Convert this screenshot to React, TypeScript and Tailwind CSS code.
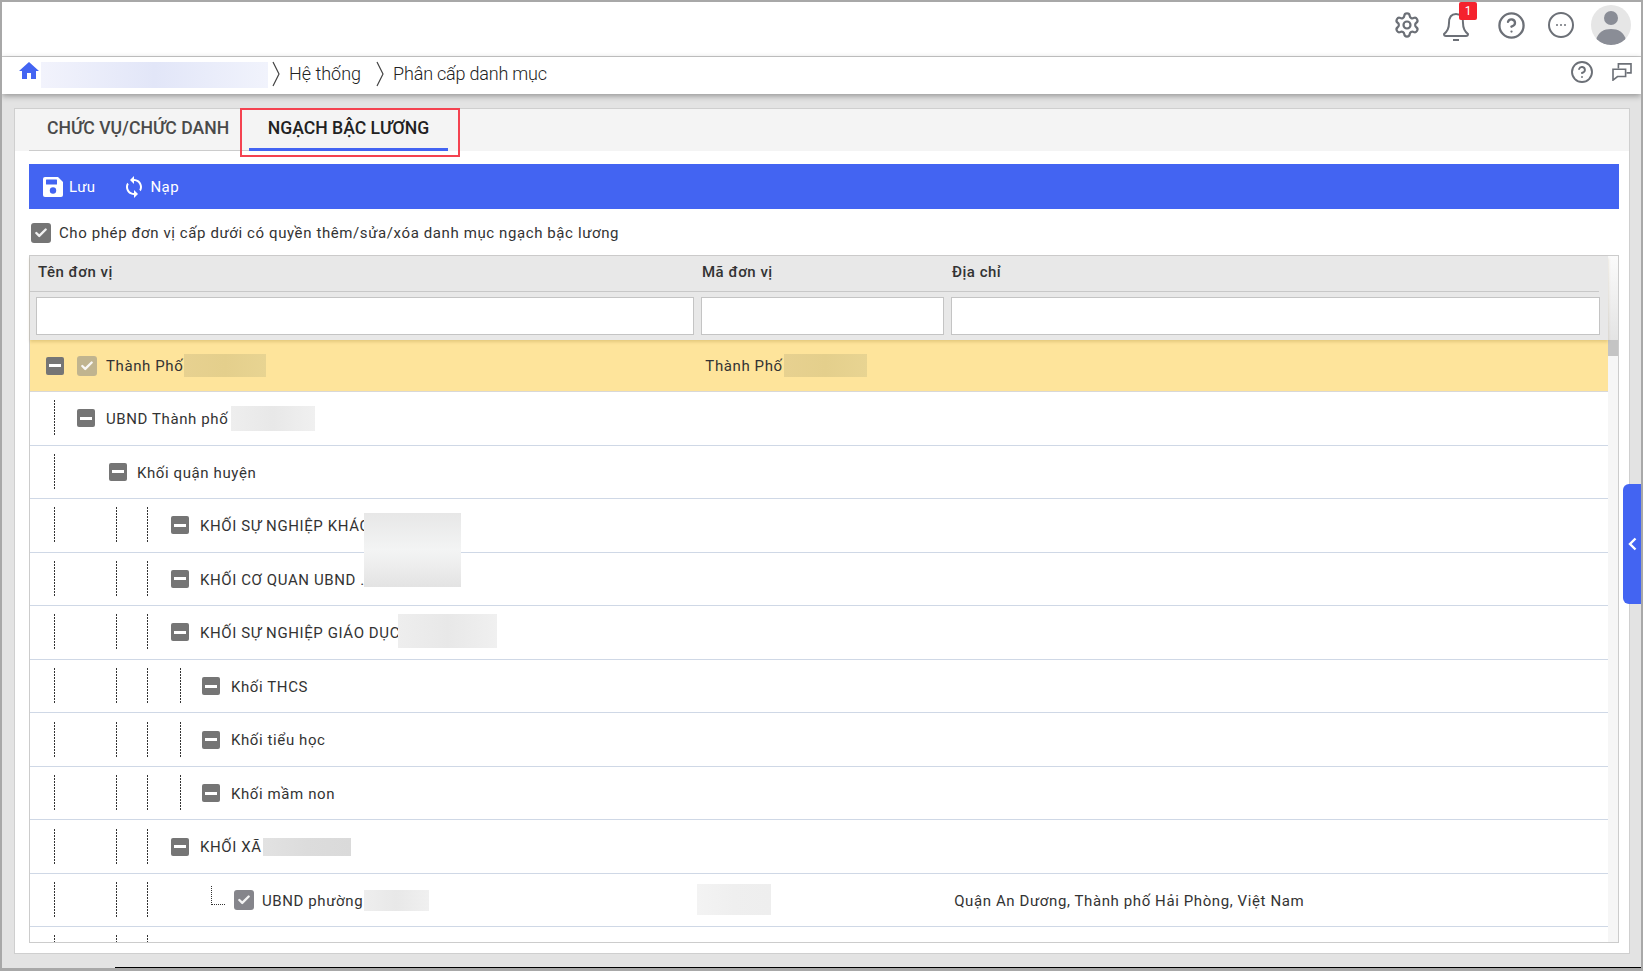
import React from 'react';
import { Settings, CircleHelp, Check } from 'lucide-react';
import { MdHome, MdSync } from 'react-icons/md';

const MinusBox = ({ className = '' }: { className?: string }) => (
    <span className={`flex h-[18px] w-[18px] shrink-0 items-center justify-center rounded-[2px] bg-[#757575] ${className}`}>
        <span className="h-[3px] w-[12px] bg-white" />
    </span>
);

const CheckBox = ({ className = '' }: { className?: string }) => (
    <span className={`flex h-[20px] w-[20px] shrink-0 items-center justify-center rounded-[3px] ${className}`}>
        <Check size={14} strokeWidth={4} className="text-white opacity-90" />
    </span>
);

// Dotted tree guide
const Guide = ({ className = '' }: { className?: string }) => (
    <span className={`h-[36px] w-px shrink-0 bg-[repeating-linear-gradient(to_bottom,#333_0,#333_2px,transparent_2px,transparent_3px)] ${className}`} />
);

const Smudge = ({ className = '' }: { className?: string }) => (
    <span className={`block shrink-0 bg-gradient-to-r from-[#eeeeee] via-[#e8e8e8] to-[#f0f0f0] ${className}`} />
);

const Row = ({ children, className = '' }: { children: React.ReactNode; className?: string }) => (
    <div className={`flex h-[53.55px] items-center border-b border-[#cfd8e6] ${className}`}>{children}</div>
);

const Label = ({ children, className = '' }: { children: React.ReactNode; className?: string }) => (
    <span className={`mt-[2px] whitespace-nowrap text-[15px] tracking-[0.6px] text-[#333] ${className}`}>{children}</span>
);

const BreadcrumbArrow = () => (
    <svg width="8" height="26" viewBox="0 0 8 26" className="shrink-0 text-[#444]">
        <path d="M1 1 L7 13 L1 25" fill="none" stroke="currentColor" strokeWidth="1.2" />
    </svg>
);

const Header = () => (
    <>
        <div className="flex h-[55px] shrink-0 items-center justify-end border-b border-[#ccc] bg-white pb-[8px]">
            <Settings size={28} strokeWidth={1.9} className="ml-auto text-[#6c7077]" />
            <div className="relative ml-[21px] mr-[1px]">
                <svg width="28" height="30" viewBox="0 0 28 30" fill="none" stroke="#6c7077" strokeWidth="2" className="mt-[2px]">
                    <path d="M14 3 C8 3 7 8 7 12 C7 17 6 20 2 23 C2 25 3 25 4 25 H24 C25 25 26 25 26 23 C22 20 21 17 21 12 C21 8 20 3 14 3 Z" strokeLinejoin="round" />
                    <path d="M11 29 H17" />
                </svg>
                <span className="absolute -right-[7px] -top-[7px] flex h-[18px] w-[18px] items-center justify-center rounded-[2px] bg-[#f5222d] text-[12px] leading-none text-white">1</span>
            </div>
            <CircleHelp size={29} strokeWidth={1.9} className="ml-[26px] text-[#6c7077]" />
            <span className="ml-[22px] flex h-[26px] w-[26px] items-center justify-center gap-[2px] rounded-full border-2 border-[#6c7077]">
                <span className="h-[2px] w-[2px] rounded-full bg-[#6c7077]" />
                <span className="h-[2px] w-[2px] rounded-full bg-[#6c7077]" />
                <span className="h-[2px] w-[2px] rounded-full bg-[#6c7077]" />
            </span>
            <span className="ml-[17px] mr-[10px] flex h-[40px] w-[40px] items-center justify-center overflow-hidden rounded-full bg-[#e6e6e6]">
                <svg width="40" height="40" viewBox="0 0 40 40">
                    <circle cx="20" cy="13" r="7" fill="#8a8d96" />
                    <path d="M5 35 C7 27 13 24 20 24 C27 24 33 27 35 35 C31 38 26 40 20 40 C14 40 9 38 5 35 Z" fill="#8a8d96" />
                </svg>
            </span>
        </div>
        <div className="relative z-10 flex h-[37px] shrink-0 items-center bg-white pb-[7px] pl-[16px] shadow-[0_2px_6px_rgba(0,0,0,0.35)]">
            <MdHome size={24} className="-ml-[1px] mb-[2px] text-[#4364f2]" />
            <span className="h-[26px] w-[227px] bg-gradient-to-r from-[#f2f3fc] via-[#e2e6f8] to-[#f1f3fc] mt-[5px]" />
            <span className="ml-[4px] mt-[3px]"><BreadcrumbArrow /></span>
            <span className="ml-[9px] mt-[3px] text-[18px] font-light text-[#222]">Hệ thống</span>
            <span className="ml-[15px] mt-[3px]"><BreadcrumbArrow /></span>
            <span className="ml-[9px] mt-[3px] text-[18px] font-light tracking-[-0.2px] text-[#222]">Phân cấp danh mục</span>
            <CircleHelp size={24} strokeWidth={1.9} className="ml-auto text-[#6c7077]" />
            <svg width="20" height="18" viewBox="0 0 22 20" className="ml-[18px] mr-[9px] text-[#6c7077]" fill="none" stroke="currentColor" strokeWidth="1.8">
                <path d="M7 6 V1 H21 V11 H16" />
                <path d="M1 7 H15 V15 H6 L1 19 Z" />
            </svg>
        </div>
    </>
);

const Tabs = () => (
    <div className="relative flex h-[42px] shrink-0 bg-[#f4f4f4] pl-[14px]">
        <div className="flex w-[220px] items-center border-b border-[#ccc] pb-[2px] pl-[18px]">
            <span className="whitespace-nowrap text-[17.6px] font-medium text-[#4a4a4a]">CHỨC VỤ/CHỨC DANH</span>
        </div>
        <div className="flex w-[199px] items-center justify-center border-b-[3px] border-[#4364f2]">
            <span className="whitespace-nowrap text-[17.6px] font-medium text-[#222]">NGẠCH BẬC LƯƠNG</span>
        </div>
        <div className="absolute left-[225px] top-[-1px] h-[49px] w-[220px] border-2 border-[#f44250]" />
    </div>
);

const Toolbar = () => (
    <div className="ml-[14px] mr-[10px] mt-[13px] flex h-[45px] shrink-0 items-center bg-[#4364f2] pl-[14px] text-[15px] tracking-[0.4px] text-white">
        <svg width="20" height="20" viewBox="0 0 20 20" fill="white">
            <path d="M2 0 H15 L20 5 V18 A2 2 0 0 1 18 20 H2 A2 2 0 0 1 0 18 V2 A2 2 0 0 1 2 0 Z" />
            <rect x="3" y="2.5" width="11" height="5" rx="0.5" fill="#4364f2" />
            <circle cx="10" cy="13.5" r="3.2" fill="#4364f2" />
        </svg>
        <span className="ml-[6px] mt-[2px]">Lưu</span>
        <MdSync size={24} className="ml-[26px] mt-[1px]" />
        <span className="ml-[5px] mt-[2px]">Nạp</span>
    </div>
);

const TreeTable = () => (
    <div className="ml-[14px] mr-[10px] mt-[12px] flex min-h-0 flex-1 border border-[#ccc]">
        <div className="relative flex min-w-0 flex-1 flex-col">
            {/* Head */}
            <div className="relative z-10 shrink-0 bg-[#e8e8e8] shadow-[0_2px_3px_rgba(120,90,0,0.2)]">
                <div className="mr-[9px] flex h-[36px] items-center border-b border-[#c8c8c8] pb-[2px] text-[15px] font-medium tracking-[0.5px] text-[#333]">
                    <span className="ml-[8px] w-[664px]">Tên đơn vị</span>
                    <span className="w-[250px]">Mã đơn vị</span>
                    <span>Địa chỉ</span>
                </div>
                <div className="flex h-[48px] gap-[7px] pl-[6px] pt-[5px]">
                    <div className="h-[38px] w-[658px] border border-[#c4c4c4] bg-white" />
                    <div className="h-[38px] w-[243px] border border-[#c4c4c4] bg-white" />
                    <div className="h-[38px] w-[649px] border border-[#c4c4c4] bg-white" />
                </div>
            </div>

            {/* Tree rows */}
            <div className="relative min-h-0 flex-1 overflow-hidden">
                <div className="flex h-[52px] items-center border-b border-[#d8d8d8] bg-[#fee49b]">
                    <MinusBox className="ml-[16px]" />
                    <CheckBox className="ml-[13px] bg-[#c0b48f]" />
                    <Label className="ml-[9px]">Thành Phố</Label>
                    <Smudge className="ml-[1px] h-[23px] w-[82px] !from-[#e7d190] !via-[#e4cf8c] !to-[#e8d492]" />
                    <Label className="ml-[439px]">Thành Phố</Label>
                    <Smudge className="ml-[1px] h-[23px] w-[83px] !from-[#e7d190] !via-[#e4cf8c] !to-[#e8d492]" />
                </div>
                <Row>
                    <Guide className="ml-[24px]" />
                    <MinusBox className="ml-[22px]" />
                    <Label className="ml-[11px]">UBND Thành phố</Label>
                    <Smudge className="ml-[3px] h-[25px] w-[84px]" />
                </Row>
                <Row>
                    <Guide className="ml-[24px]" />
                    <MinusBox className="ml-[54px]" />
                    <Label className="ml-[10px]">Khối quận huyện</Label>
                </Row>
                <Row>
                    <Guide className="ml-[24px]" />
                    <Guide className="ml-[61px]" />
                    <Guide className="ml-[30px]" />
                    <MinusBox className="ml-[23px]" />
                    <Label className="ml-[11px]">KHỐI SỰ NGHIỆP KHÁC</Label>
                </Row>
                <Row>
                    <Guide className="ml-[24px]" />
                    <Guide className="ml-[61px]" />
                    <Guide className="ml-[30px]" />
                    <MinusBox className="ml-[23px]" />
                    <Label className="ml-[11px]">KHỐI CƠ QUAN UBND ...</Label>
                </Row>
                <Row>
                    <Guide className="ml-[24px]" />
                    <Guide className="ml-[61px]" />
                    <Guide className="ml-[30px]" />
                    <MinusBox className="ml-[23px]" />
                    <Label className="ml-[11px]">KHỐI SỰ NGHIỆP GIÁO DỤC</Label>
                    <Smudge className="relative -ml-[2px] -mt-[2px] h-[34px] w-[99px]" />
                </Row>
                {['Khối THCS', 'Khối tiểu học', 'Khối mầm non'].map((name) => (
                    <Row key={name}>
                        <Guide className="ml-[24px]" />
                        <Guide className="ml-[61px]" />
                        <Guide className="ml-[30px]" />
                        <Guide className="ml-[32px]" />
                        <MinusBox className="ml-[21px]" />
                        <Label className="ml-[11px]">{name}</Label>
                    </Row>
                ))}
                <Row>
                    <Guide className="ml-[24px]" />
                    <Guide className="ml-[61px]" />
                    <Guide className="ml-[30px]" />
                    <MinusBox className="ml-[23px]" />
                    <Label className="ml-[11px]">KHỐI XÃ</Label>
                    <Smudge className="ml-[1px] h-[18px] w-[88px] !from-[#e2e2e2] !via-[#dcdcdc] !to-[#dadada]" />
                </Row>
                <Row>
                    <Guide className="ml-[24px]" />
                    <Guide className="ml-[61px]" />
                    <Guide className="ml-[30px]" />
                    <span className="ml-[63px] -mt-[10px] h-[19px] w-[14px] shrink-0 border-b border-l border-dotted border-[#333]" />
                    <CheckBox className="ml-[9px] bg-[#85858b]" />
                    <Label className="ml-[8px]">UBND phường</Label>
                    <Smudge className="ml-[1px] h-[21px] w-[65px]" />
                    <Smudge className="ml-[268px] -mt-[2px] h-[31px] w-[74px] !from-[#f3f3f3] !via-[#efefef] !to-[#eeeeee]" />
                    <Label className="ml-[183px]">Quận An Dương, Thành phố Hải Phòng, Việt Nam</Label>
                </Row>
                <div className="flex items-start pt-[8px]">
                    <Guide className="ml-[24px]" />
                    <Guide className="ml-[61px]" />
                    <Guide className="ml-[30px]" />
                </div>
                {/* Redaction patch across two rows */}
                <div className="absolute left-[334px] top-[173px] h-[74px] w-[97px] bg-[linear-gradient(to_bottom,#e7e7e7_0%,#f3f4f4_50%,#ededed_72%,#e3e3e3_100%)]" />
            </div>
        </div>

        {/* Scrollbar */}
        <div className="flex w-[10px] shrink-0 flex-col bg-[#f6f6f6]">
            <div className="h-[84px] bg-gradient-to-b from-[#fbfbfb] to-[#e4e4e4]" />
            <div className="h-[16px] bg-[#c4c4c4]" />
        </div>
    </div>
);

export default function App() {
    return (
        <div className="relative flex h-[971px] w-[1643px] flex-col overflow-hidden border-x-2 border-t-2 border-b-[3px] border-[#a8a8a8] bg-white font-['Roboto',sans-serif]">
            <Header />
            <div className="flex min-h-0 flex-1 flex-col bg-[#e3e3e3] pb-[14px] pl-[12px] pr-[11px] pt-[14px]">
                <div className="flex min-h-0 flex-1 flex-col border border-[#cfcfcf] bg-white pb-[10px]">
                    <Tabs />
                    <Toolbar />
                    <div className="mx-[16px] flex h-[46px] shrink-0 items-center pt-[2px]">
                        <CheckBox className="bg-[#757575]" />
                        <span className="ml-[8px] whitespace-nowrap text-[15px] tracking-[0.6px] text-[#333]">Cho phép đơn vị cấp dưới có quyền thêm/sửa/xóa danh mục ngạch bậc lương</span>
                    </div>
                    <div className="-mt-[12px] flex min-h-0 flex-1 flex-col">
                        <TreeTable />
                    </div>
                </div>
            </div>
            {/* Collapsed side panel handle */}
            <div className="absolute right-0 top-[482px] flex h-[120px] w-[18px] items-center justify-center rounded-l-[6px] bg-[#4364f2]">
                <svg width="9" height="14" viewBox="0 0 9 14" fill="none" stroke="white" strokeWidth="2.4">
                    <path d="M7.5 1.5 L2 7 L7.5 12.5" />
                </svg>
            </div>
            <div className="absolute bottom-0 left-[113px] right-0 h-[1px] bg-black" />
        </div>
    );
}
